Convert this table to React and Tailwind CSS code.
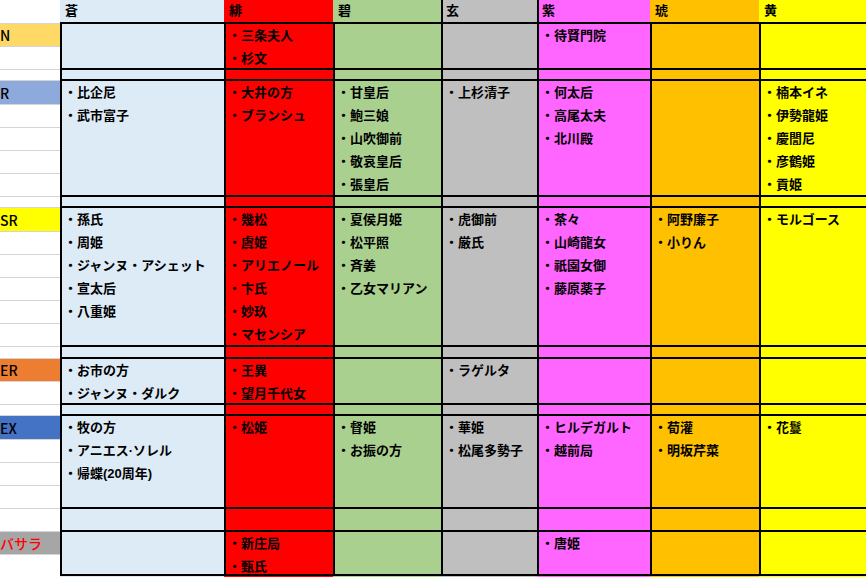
// Rarity (rows) × colour attribute (columns) roster, drawn as a spreadsheet.
// Each group row is a black-bordered block; thin spacer rows sit between them.

const GROUPS = [
  { key: 'N', label: 'N', labelCls: 'bg-[#FFD966] text-black', cell: 'h-[46px]', rows: ['h-[23px]', 'h-[23px]'] },
  { key: 'g1', cell: 'h-[11px]', rows: ['h-[11px]'] },
  { key: 'R', label: 'R', labelCls: 'bg-[#8EA9DB] text-black', cell: 'h-[116px]', rows: ['h-[24px]', 'h-[23px]', 'h-[23px]', 'h-[23px]', 'h-[23px]'] },
  { key: 'g2', cell: 'h-[11px]', rows: ['h-[11px]'] },
  { key: 'SR', label: 'SR', labelCls: 'bg-[#FFFF00] text-black', cell: 'h-[139px]', rows: ['h-[24px]', 'h-[23px]', 'h-[23px]', 'h-[23px]', 'h-[23px]', 'h-[23px]'] },
  { key: 'g3', cell: 'h-[12px]', rows: ['h-[12px]'] },
  { key: 'ER', label: 'ER', labelCls: 'bg-[#ED7D31] text-black', cell: 'h-[46px]', rows: ['h-[23px]', 'h-[23px]'] },
  { key: 'g4', cell: 'h-[11px]', rows: ['h-[11px]'] },
  { key: 'EX', label: 'EX', labelCls: 'bg-[#4472C4] text-black', cell: 'h-[93px]', rows: ['h-[24px]', 'h-[23px]', 'h-[23px]', 'h-[23px]'] },
  { key: 'g5', cell: 'h-[23px]', rows: ['h-[23px]'] },
  { key: 'B', label: 'バサラ', labelCls: 'bg-[#A6A6A6] text-[#FF0000]', cell: 'h-[46px]', rows: ['h-[23px]', 'h-[23px]'] },
]

const COLS = [
  {
    name: '蒼', w: 'w-[164px]', bg: 'bg-[#DDEBF7]', headBorder: 'border-[#DDEBF7]',
    items: {
      R: ['比企尼', '武市富子'],
      SR: ['孫氏', '周姫', 'ジャンヌ・アシェット', '宣太后', '八重姫'],
      ER: ['お市の方', 'ジャンヌ・ダルク'],
      EX: ['牧の方', 'アニエス·ソレル', '帰蝶(20周年)'],
    },
  },
  {
    name: '緋', w: 'w-[109px]', bg: 'bg-[#FF0000]', headBorder: 'border-[#FF0000]',
    items: {
      N: ['三条夫人', '杉文'],
      R: ['大井の方', 'ブランシュ'],
      SR: ['幾松', '虞姫', 'アリエノール', '卞氏', '妙玖', 'マセンシア'],
      ER: ['王異', '望月千代女'],
      EX: ['松姫'],
      B: ['新庄局', '甄氏'],
    },
  },
  {
    name: '碧', w: 'w-[108px]', bg: 'bg-[#A9D08E]', headBorder: 'border-[#A9D08E]',
    items: {
      R: ['甘皇后', '鮑三娘', '山吹御前', '敬哀皇后', '張皇后'],
      SR: ['夏侯月姫', '松平照', '斉姜', '乙女マリアン'],
      EX: ['督姫', 'お振の方'],
    },
  },
  {
    name: '玄', w: 'w-[96px]', bg: 'bg-[#BFBFBF]', headBorder: 'border-black',
    items: {
      R: ['上杉清子'],
      SR: ['虎御前', '厳氏'],
      ER: ['ラゲルタ'],
      EX: ['華姫', '松尾多勢子'],
    },
  },
  {
    name: '紫', w: 'w-[113px]', bg: 'bg-[#FF66FF]', headBorder: 'border-black',
    items: {
      N: ['待賢門院'],
      R: ['何太后', '高尾太夫', '北川殿'],
      SR: ['茶々', '山崎龍女', '祇園女御', '藤原薬子'],
      EX: ['ヒルデガルト', '越前局'],
      B: ['唐姫'],
    },
  },
  {
    name: '琥', w: 'w-[109px]', bg: 'bg-[#FFC000]', headBorder: 'border-[#FFC000]',
    items: {
      SR: ['阿野廉子', '小りん'],
      EX: ['荀灌', '明坂芹菜'],
    },
  },
  {
    name: '黄', w: 'w-[107px]', bg: 'bg-[#FFFF00]', headBorder: 'border-[#FFFF00]',
    items: {
      R: ['楠本イネ', '伊勢龍姫', '慶誾尼', '彦鶴姫', '貢姫'],
      SR: ['モルゴース'],
      EX: ['花鬘'],
    },
  },
]

function LabelColumn() {
  return (
    <div className="w-[60px] shrink-0 flex flex-col bg-white">
      <div className="h-[23px]" />
      {GROUPS.map((g) => (
        <div key={g.key} className={`${g.cell} flex flex-col`}>
          {g.rows.map((h, i) => (
            <div key={i} className={`${h} box-border border-t border-[#D4D4D4] flex`}>
              {i === 0 && g.label ? (
                <div className={`flex-1 flex items-center text-[14px] font-medium leading-none font-['Noto_Sans_CJK_JP',sans-serif] ${g.labelCls}`}>
                  {g.label}
                </div>
              ) : null}
            </div>
          ))}
        </div>
      ))}
    </div>
  )
}

function DataColumn({ col }) {
  return (
    <div className={`${col.w} shrink-0 flex flex-col ${col.bg}`}>
      <div className={`h-[22px] box-border border-l-2 ${col.headBorder} pl-[3px] text-[13px] leading-[22px]`}>
        {col.name}
      </div>
      <div className="flex flex-col border-l-2 border-black">
        {GROUPS.map((g, i) => (
          <div
            key={g.key}
            className={`${g.cell} box-border border-t-2 border-black overflow-hidden pl-[2px] ${
              i === GROUPS.length - 1 ? 'border-b-2' : ''
            }`}
          >
            {(col.items[g.key] || []).map((name) => (
              <div key={name} className="h-[23px] leading-[23px] whitespace-nowrap">
                ・{name}
              </div>
            ))}
          </div>
        ))}
      </div>
    </div>
  )
}

export default function App() {
  return (
    <div className="w-[866px] h-[577px] overflow-hidden bg-white text-black text-[13px] font-semibold font-['Liberation_Sans','Noto_Sans_CJK_JP',sans-serif]">
      <div className="flex">
        <LabelColumn />
        {COLS.map((c) => (
          <DataColumn key={c.name} col={c} />
        ))}
      </div>
    </div>
  )
}
